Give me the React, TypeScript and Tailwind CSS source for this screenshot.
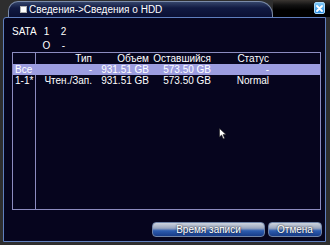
import React from "react";

const rows = [
  { id: "Все", type: "-", total: "931.51 GB", free: "573.50 GB", status: "-", sel: true },
  { id: "1-1*", type: "Чтен./Зап.", total: "931.51 GB", free: "573.50 GB", status: "Normal", sel: false },
];

function Row({ a, b, c, d, e, sel }: { a: string; b: string; c: string; d: string; e: string; sel?: boolean }) {
  return (
    <div className={"flex h-[11px] leading-[11px] " + (sel ? "bg-[#9c9de0]" : "")}>
      <div className="w-[23px] pl-[2px] shrink-0">{a}</div>
      <div className="w-[56px] text-right shrink-0">{b}</div>
      <div className="w-[57px] text-right shrink-0">{c}</div>
      <div className="w-[62px] text-right shrink-0">{d}</div>
      <div className="w-[58px] text-right shrink-0">{e}</div>
    </div>
  );
}

export default function App() {
  return (
    <div
      className="relative w-[330px] h-[245px] overflow-hidden bg-[#2e2e2e] text-white text-[10px]"
      style={{ fontFamily: '"Liberation Sans", Arial, sans-serif' }}
    >
      {/* title row */}
      <div className="flex h-[17px]">
        <div className="w-[8px] shrink-0" />
        <div className="mt-[1px] h-[16px] w-[265px] shrink-0 rounded-tl-[10px] rounded-tr-[14px] border border-b-0 border-[#7a8aa8] bg-[linear-gradient(to_bottom,#34446a_0%,#111a42_40%,#0a1034_100%)] flex items-center">
          <div className="ml-[11px] w-[7px] h-[7px] bg-white border border-[#b0b0b0]" />
          <span className="ml-[2px] leading-[14px] text-white">Сведения-&gt;Сведения о HDD</span>
        </div>
        <div className="flex-1 flex justify-end items-start bg-[linear-gradient(to_bottom,#3a3632_0%,#121212_30%,#000000_60%)]">
          <div className="mt-[2px] mr-[5px] w-[11px] h-[12px] rounded-[2px] border border-[#a8d8f8] bg-[linear-gradient(to_bottom,#7cc8f8,#2e8ee0)] flex items-center justify-center">
            <svg width="7" height="7" viewBox="0 0 7 7">
              <path d="M1 1L6 6M6 1L1 6" stroke="white" strokeWidth="1.8" strokeLinecap="round" />
            </svg>
          </div>
        </div>
      </div>

      {/* panel */}
      <div className="ml-[3px] w-[323px] h-[225px] border border-[#5f7fbe] rounded-tl-[3px] bg-[#06051e] flex flex-col">
        <div className="pl-[8px] pt-[7px]">
          <div className="flex leading-[14px]">
            <span className="w-[26px]">SATA</span>
            <span className="w-[17px] text-center">1</span>
            <span className="w-[17px] text-center">2</span>
          </div>
          <div className="flex leading-[13px]">
            <span className="w-[26px]" />
            <span className="w-[17px] text-center">O</span>
            <span className="w-[17px] text-center">-</span>
          </div>
        </div>
        <div className="relative ml-[8px] w-[309px] h-[158px] border border-[#8c8cc0]">
          <div className="absolute left-[22px] top-0 bottom-0 w-px bg-[#8c8cc0]" />
          <div className="relative">
            <Row a="" b="Тип" c="Объем" d="Оставшийся" e="Статус" />
            {rows.map((r) => (
              <Row key={r.id} a={r.id} b={r.type} c={r.total} d={r.free} e={r.status} sel={r.sel} />
            ))}
          </div>
        </div>
        <div className="mt-auto mb-[4px] flex justify-end gap-[3px] pr-[3px]">
          <button className="w-[113px] h-[15px] rounded-[4px] border border-[#7084a8] bg-[linear-gradient(to_bottom,#cdd4de_0%,#9aa6be_40%,#2c5cb0_60%,#183c88_100%)] text-white text-[10px] leading-[13px] [text-shadow:0_0_2px_#000]">
            Время записи
          </button>
          <button className="w-[54px] h-[15px] rounded-[4px] border border-[#7084a8] bg-[linear-gradient(to_bottom,#cdd4de_0%,#9aa6be_40%,#2c5cb0_60%,#183c88_100%)] text-white text-[10px] leading-[13px] [text-shadow:0_0_2px_#000]">
            Отмена
          </button>
        </div>
      </div>

      {/* mouse cursor */}
      <svg className="absolute left-[219px] top-[128px]" width="8" height="12" viewBox="0 0 8 12">
        <path d="M0.5 0.5L0.5 9L2.6 7L4.2 10.8L5.6 10.2L4 6.6L7 6.6Z" fill="white" stroke="#222" strokeWidth="0.6" />
      </svg>
    </div>
  );
}
